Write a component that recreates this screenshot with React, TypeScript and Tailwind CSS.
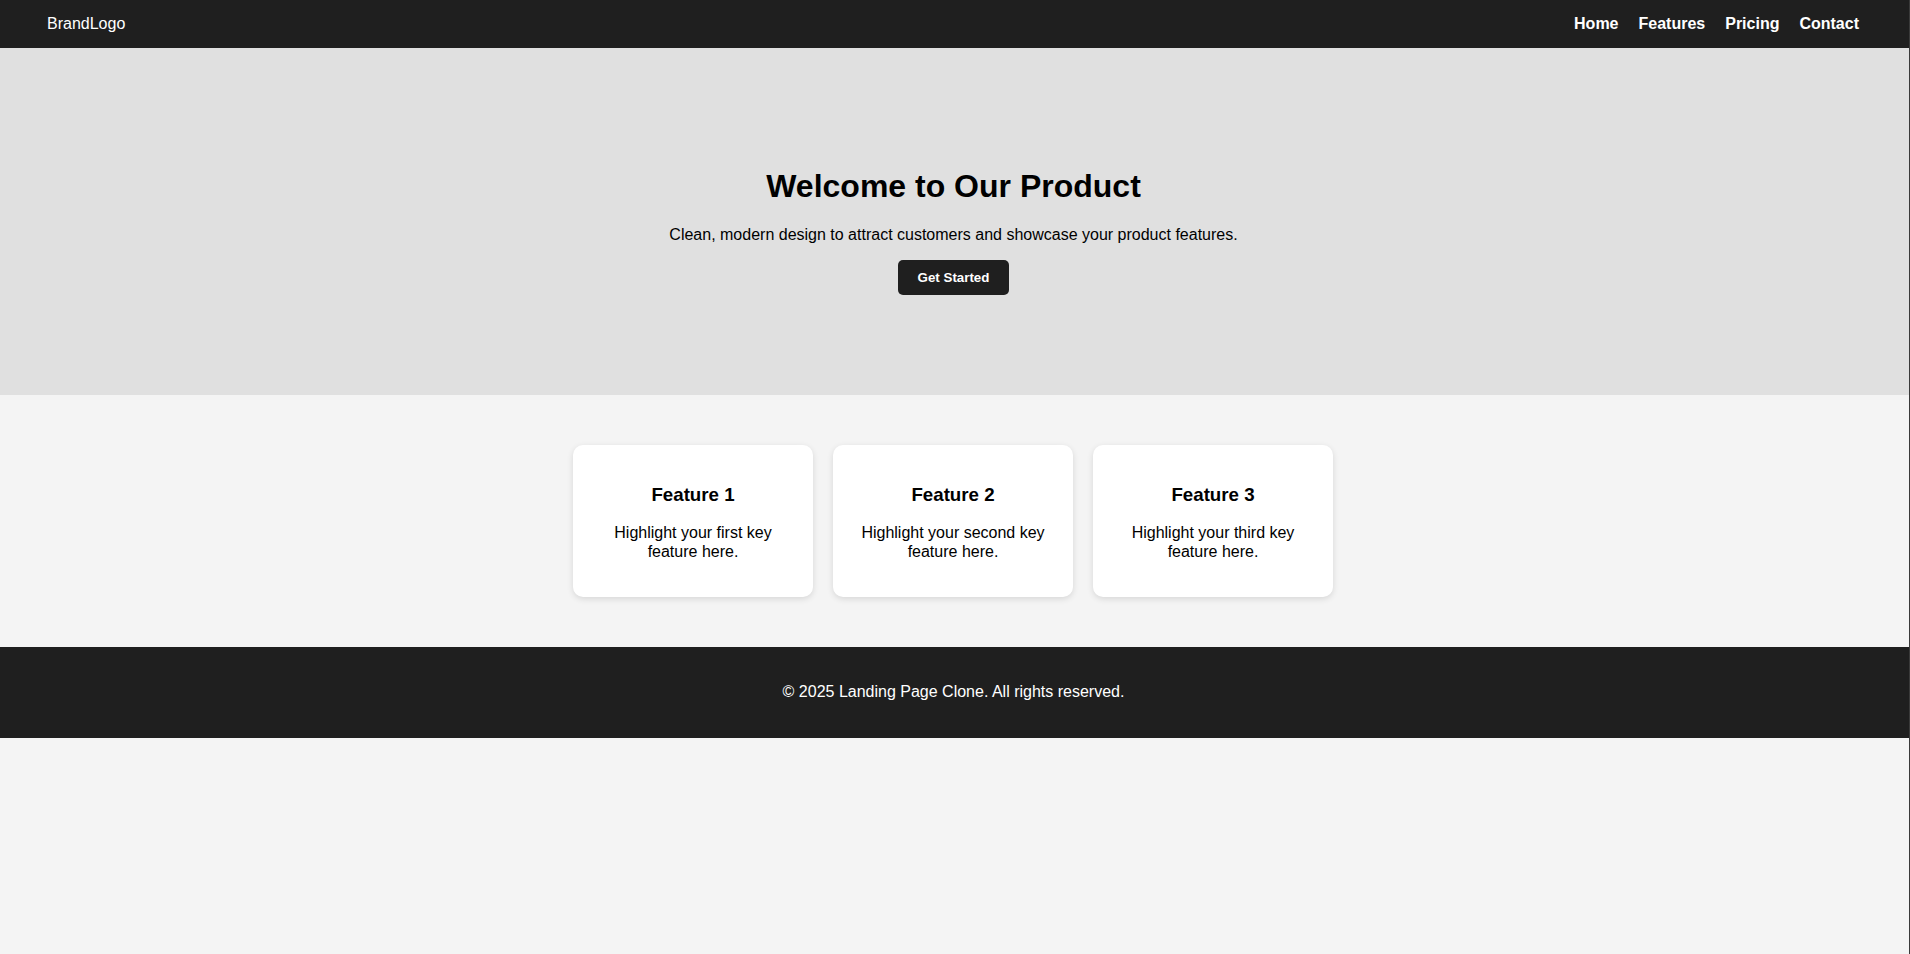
import React from "react";

const features = [
  { title: "Feature 1", text: "Highlight your first key feature here." },
  { title: "Feature 2", text: "Highlight your second key feature here." },
  { title: "Feature 3", text: "Highlight your third key feature here." },
];

export default function App() {
  return (
    <div
      className="min-h-screen bg-[#f4f4f4] text-black border-r border-[#3a3a3a]"
      style={{ fontFamily: '"Liberation Sans", Arial, sans-serif' }}
    >
      <header className="h-12 bg-[#1f1f1f] text-white flex items-center justify-between pl-[47px] pr-[50px]">
        <div className="text-base leading-[18px]">BrandLogo</div>
        <nav className="flex gap-5 text-base font-bold leading-[18px]">
          <a href="#">Home</a>
          <a href="#">Features</a>
          <a href="#">Pricing</a>
          <a href="#">Contact</a>
        </nav>
      </header>

      <section className="bg-[#e0e0e0] pt-[100px] pb-[100px] pr-[2px] flex flex-col items-center text-center">
        <h1 className="mt-[20px] mb-[21px] text-[32px] leading-[37px] font-bold">Welcome to Our Product</h1>
        <p className="mb-4 text-base leading-[18.4px]">
          Clean, modern design to attract customers and showcase your product features.
        </p>
        <button className="h-[35px] px-5 rounded-[5px] bg-[#1f1f1f] text-white text-[13.33px] font-bold leading-[15px]">
          Get Started
        </button>
      </section>

      <section className="py-[50px] pr-[3px] flex justify-center gap-5">
        {features.map((f) => (
          <div
            key={f.title}
            className="w-[240px] bg-white rounded-[10px] p-5 text-center shadow-[0_2px_6px_rgba(0,0,0,0.12)]"
          >
            <h3 className="mt-[18.72px] mb-[18.72px] text-[18.72px] leading-[21.5px] font-bold">{f.title}</h3>
            <p className="mb-4 text-base leading-[18.4px]">{f.text}</p>
          </div>
        ))}
      </section>

      <footer className="bg-[#1f1f1f] text-white text-center py-[36px] pr-[2px]">
        <p className="text-base leading-[18.4px]">© 2025 Landing Page Clone. All rights reserved.</p>
      </footer>
    </div>
  );
}
